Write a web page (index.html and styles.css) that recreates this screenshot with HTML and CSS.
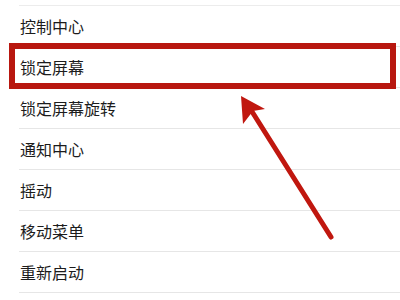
FILE: index.html
```html
<!DOCTYPE html>
<html lang="zh">
<head>
<meta charset="utf-8">
<link rel="stylesheet" href="styles.css">
</head>
<body>
<div class="page">
  <ul class="menu">
    <li class="item">控制中心</li>
    <li class="item">锁定屏幕</li>
    <li class="item">锁定屏幕旋转</li>
    <li class="item">通知中心</li>
    <li class="item">摇动</li>
    <li class="item">移动菜单</li>
    <li class="item">重新启动</li>
  </ul>
  <div class="highlight"></div>
  <svg class="arrow" width="400" height="300" viewBox="0 0 400 300">
    <line x1="331" y1="237" x2="251" y2="110" stroke="#c0170f" stroke-width="5" stroke-linecap="round"/>
    <polygon points="241,96 265,109 253,111 243,124" fill="#c0170f"/>
  </svg>
</div>
</body>
</html>
```
FILE: styles.css
```css
html, body {
  margin: 0;
  padding: 0;
  background: #ffffff;
}
.page {
  position: relative;
  width: 400px;
  height: 300px;
  overflow: hidden;
  font-family: "Noto Sans CJK SC", "Noto Sans", sans-serif;
}
.menu {
  list-style: none;
  margin: 5px 0 0 19px;
  padding: 0;
  border-top: 1px solid #ececec;
}
.item {
  height: 40px;
  line-height: 40px;
  padding-left: 1px;
  font-size: 16px;
  color: #1c1c1c;
  border-bottom: 1px solid #e6e6e6;
}
.highlight {
  position: absolute;
  left: 9px;
  top: 43px;
  width: 375px;
  height: 34px;
  border: 6px solid #b8170f;
}
.arrow {
  position: absolute;
  left: 0;
  top: 0;
}
```
